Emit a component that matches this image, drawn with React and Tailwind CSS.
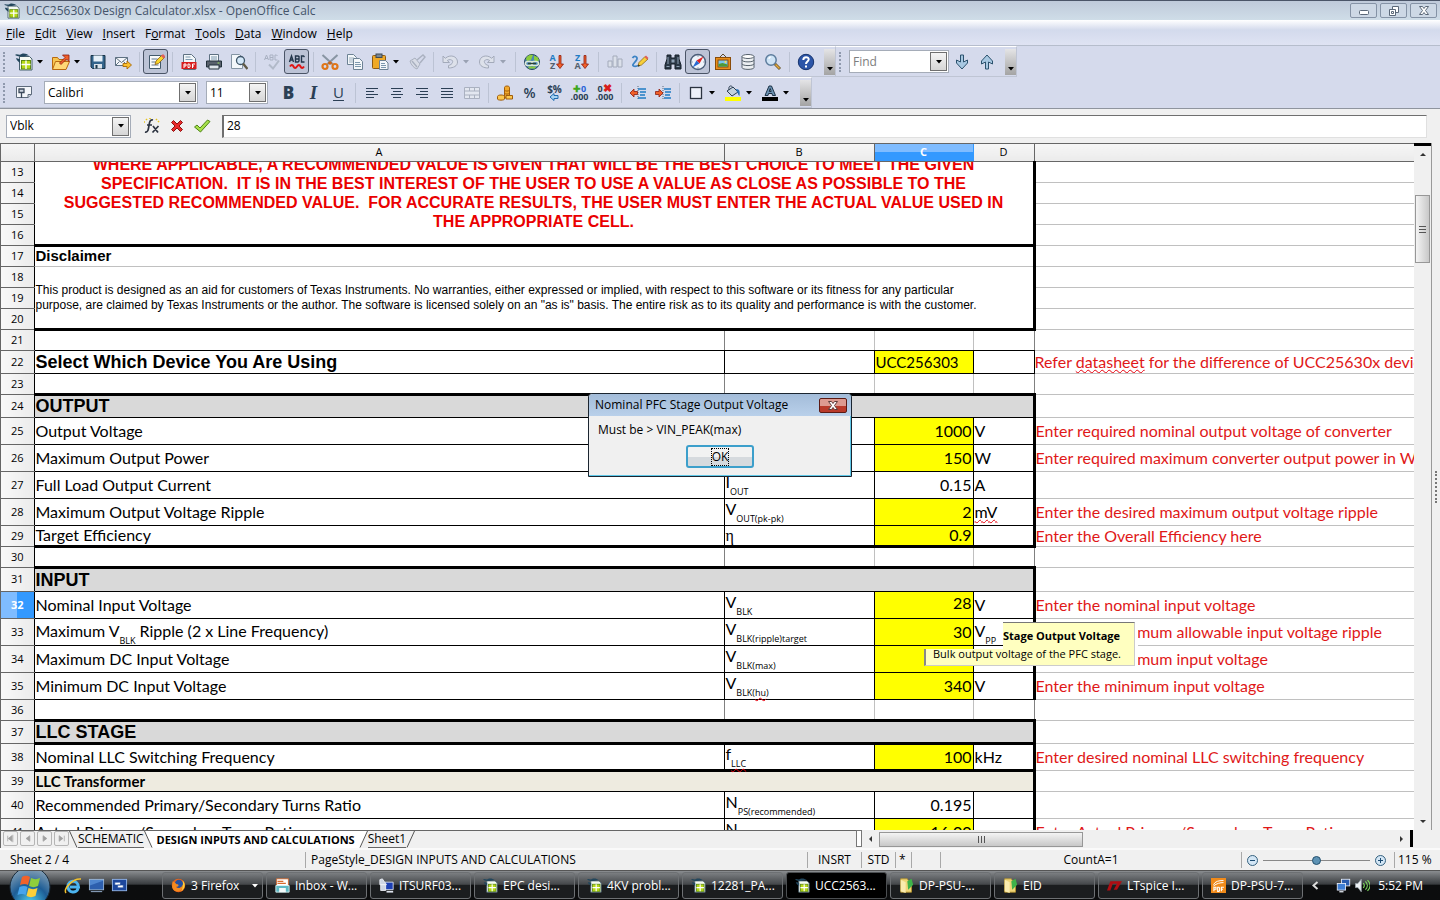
import { clsx } from 'clsx';

const MENUS = ['File', 'Edit', 'View', 'Insert', 'Format', 'Tools', 'Data', 'Window', 'Help'];
const MENU_KEYS = { Format: 1 };

const NAVY = '#2b3f55';

/* ---------- toolbar drawings, all on a 18x18 grid ---------- */
const ICONS = {
  calc: (
    <>
      <path d="M4.500 3.500h10l2.500 2.500v11H4.500z" fill="#f6faf2" stroke="#47606e" />
      <path d="M0 2c2-2 4 1 6.500-1C9 0 12 1 14 2.500c-3-.5-4 1-6.500 1C4 3.500 2 3 0 2z" fill="#22465c" />
      <path d="M1 5.500c1.500-1 3 1 4 .5v4c-1-1-3-2-4-4.500z" fill="#22465c" />
      <rect x="6.500" y="7.500" width="9" height="8.500" fill="#b7d916" stroke="#5f8a14" />
      <path d="M6.500 11.500h9M11 7.500v8.500" stroke="#fff" strokeWidth="1.400" />
    </>
  ),
  open: (
    <>
      <path d="M.5 16V4.500h5l1.500 2h7V16z" fill="#f8c650" stroke="#b96a10" />
      <path d="M.5 16.500l3-8h14l-3.500 8z" fill="#ffd876" stroke="#b96a10" />
      <path d="M7.500 10l5.500-5.500L10.500 2h6.500v6.500L14.500 6 9 11.500z" fill="#f0602a" stroke="#8d1d10" strokeWidth=".8" />
    </>
  ),
  save: (
    <>
      <path d="M2 2.500h14v13H3.500L2 14z" fill="#34658c" stroke="#183448" />
      <rect x="4.500" y="2.500" width="9" height="6" fill="#e6f0f8" />
      <rect x="5" y="11" width="8" height="4.500" fill="#dbe3ea" />
      <rect x="6.500" y="12" width="2" height="3.500" fill="#183448" />
    </>
  ),
  mail: (
    <>
      <path d="M1.500 4.500h12v8h-12z" fill="#f4f6fa" stroke="#5e7182" />
      <path d="M1.500 4.500l6 5 6-5M1.500 12.500l4-4M9.500 8.500l2 2" fill="none" stroke="#5e7182" />
      <path d="M9 10.500h4V8l4.500 4-4.500 4v-2.500H9z" fill="#fbc02d" stroke="#a86908" strokeWidth=".9" />
    </>
  ),
  edit: (
    <>
      <path d="M2.500 2.500h11v13h-11z" fill="#f9fbfd" stroke="#42596b" />
      <path d="M4.500 6h6M4.500 9h4M4.500 12h7" stroke="#60778a" />
      <path d="M8 11.500l1-3.500 6-6 2.500 2.500-6 6z" fill="#f8d62a" stroke="#8d5a14" strokeWidth=".8" />
      <path d="M14 3l2-2 2.500 2.500-2 2z" fill="#e0605c" />
    </>
  ),
  pdf: (
    <>
      <path d="M3.500 1.500h8l4 4v11h-12z" fill="#f3f7fa" stroke="#5e7182" />
      <path d="M5.500 4h5M5.500 6.500h7" stroke="#7c98ad" />
      <rect x="1.500" y="9" width="15" height="7" fill="#d81e1e" />
      <path d="M4 15v-4h2v2H4M8 11v3.500h1.500l.5-.5v-2.500L9 11zM12.500 15v-4h2.500M12.500 13H14" fill="none" stroke="#fff" />
    </>
  ),
  print: (
    <>
      <path d="M4.500 8V1.500h9V8" fill="#f4f8fb" stroke="#5e7182" />
      <path d="M6 4h6M6 6h6" stroke="#7c98ad" />
      <path d="M1.500 8h15v6h-15z" fill="#59616c" stroke="#22303a" />
      <path d="M4 12h10v4H4z" fill="#dfe5ea" stroke="#22303a" />
      <rect x="12.500" y="9.500" width="2" height="1" fill="#9be05a" />
    </>
  ),
  preview: (
    <>
      <path d="M1.500 1.500h8l3 3v11h-11z" fill="#f3f7fa" stroke="#8494a3" />
      <circle cx="10.500" cy="7.500" r="4" fill="#d4e8f8" stroke="#3e5568" strokeWidth="1.300" />
      <path d="M13 10.500l4.500 5.500" stroke="#5f5a46" strokeWidth="2.400" />
    </>
  ),
  spell: (
    <>
      <path d="M1.500 7l2-5 2 5M2 5.500h3M7 2v5h3V2zM7 4.500h3M14.500 3l-1-1H12v5h2.500" fill="none" stroke="#a9b1c2" />
      <path d="M6 11.500l4 4 6-8" fill="none" stroke="#b2bac9" strokeWidth="2" />
    </>
  ),
  autospell: (
    <>
      <path d="M1.500 9l2-6 2 6M2 7h3M7.500 3v6H10l1-1V3.500L10 3zM7.500 6H11M16.500 4l-1-1h-2v6h3" fill="none" stroke="#22354a" strokeWidth="1.400" />
      <path d="M2 13.500q2-3 3.500 0t3.500 0 3.500 0 3.500 0" fill="none" stroke="#e01414" strokeWidth="2" />
    </>
  ),
  cut: (
    <>
      <path d="M1.500 2l11 10M16.500 2L5.500 12" stroke="#8895a3" strokeWidth="2" />
      <path d="M6.500 10l2.500-2 2.500 2-2.500 2z" fill="#c8641a" />
      <circle cx="4" cy="13.500" r="2.500" fill="none" stroke="#e07518" strokeWidth="2.200" />
      <circle cx="14" cy="13.500" r="2.500" fill="none" stroke="#e07518" strokeWidth="2.200" />
    </>
  ),
  copy: (
    <>
      <path d="M1.500 1.500h6l3 3v7h-9z" fill="#f3f7fa" stroke="#6c8294" />
      <path d="M3 5h5M3 7h5M3 9h5" stroke="#9db0bf" />
      <path d="M7.500 5.500h6l3 3v8h-9z" fill="#f3f7fa" stroke="#6c8294" />
      <path d="M9 9.500h5M9 11.500h6M9 13.500h6" stroke="#7c98ad" />
    </>
  ),
  paste: (
    <>
      <rect x="1.500" y="2.500" width="13" height="13" rx="1" fill="#efa927" stroke="#8d5a14" />
      <rect x="5" y="1" width="6" height="3.500" fill="#7a8792" stroke="#3e4a55" />
      <path d="M8.500 7.500h6l2.500 2.500v6.500H8.500z" fill="#f4f8fb" stroke="#6c8294" />
      <path d="M10 10.500h4M10 12.500h5M10 14.500h5" stroke="#7c98ad" />
    </>
  ),
  brush: (
    <>
      <path d="M2 8l5-3 5 6-3 5c-3-1-6-4-7-8z" fill="#d8dce6" stroke="#aab1c0" />
      <path d="M9 7l6-5 2 2-5 6M4 8l5 6" fill="none" stroke="#aab1c0" strokeWidth="1.400" />
    </>
  ),
  undo: <path d="M2 3v6.500h6.500L6.300 7.500c2.700-2 6.200-.5 5.200 2-.5 1.500-2 2.500-4 3v2.500c5 0 9-2 9-6C16.500 3 9 1 4.300 5.300z" fill="#dde1ea" stroke="#a3aaba" />,
  redo: <path d="M16 3v6.500H9.500l2.200-2C9 5.500 5.500 7 6.500 9.500c.5 1.500 2 2.500 4 3v2.500c-5 0-9-2-9-6C1.500 3 9 1 13.700 5.300z" fill="#dde1ea" stroke="#a3aaba" />,
  link: (
    <>
      <circle cx="9" cy="9" r="7.500" fill="#4a86b5" stroke="#24445c" />
      <path d="M3 6c1-4 5-4.500 7-4l-2 5-4 1zM11 6V2.500l4 2 1 3-4 1z" fill="#8ccc3c" />
      <rect x="2.500" y="8.500" width="7" height="4" rx="2" fill="none" stroke="#dde8d8" strokeWidth="1.600" />
      <rect x="8.500" y="8.500" width="7" height="4" rx="2" fill="none" stroke="#dde8d8" strokeWidth="1.600" />
      <path d="M5 10.500h8" stroke="#2c4234" strokeWidth="1.400" />
      <path d="M5.500 14.500h7" stroke="#8ccc3c" strokeWidth="2" />
    </>
  ),
  chart: (
    <>
      <path d="M2 8h4v6H2zM7 3h4v11H7zM12 6h4v8h-4z" fill="#dbe0ea" stroke="#a3aaba" />
    </>
  ),
  draw: (
    <>
      <path d="M1.500 5c2-3 6-1 4 2s-5 5-3 6 4 0 6-1" fill="none" stroke="#3c83c4" strokeWidth="1.800" />
      <path d="M7 13l1-3.500 6-6L17 6l-6.500 6z" fill="#f8cf3a" stroke="#8d6a14" strokeWidth=".8" />
      <path d="M13.500 4l1.500-1.500 2.500 2.500L16 6.500z" fill="#e0605c" />
      <path d="M7 13.500l.5-2 1.500 1.500z" fill="#222" />
    </>
  ),
  find: (
    <>
      <path d="M3 2h4v3h4V2h4v4l2 6v4h-6v-5H7v5H1v-4l2-6z" fill="#2c3947" stroke="#16202b" />
      <path d="M4 4v7M14 4v7M2.500 13.500h3M12.500 13.500h3" stroke="#8fa2b5" />
      <rect x="7.500" y="6.500" width="3" height="3" fill="#8fa2b5" />
    </>
  ),
  navigator: (
    <>
      <circle cx="9" cy="9" r="7.500" fill="#eef4fb" stroke="#4b5d78" strokeWidth="1.400" />
      <path d="M14.500 3.500L10.500 10.500 7.500 7.500z" fill="#e32222" />
      <path d="M3.500 14.500L7.500 7.500l3 3z" fill="#2a6ad0" />
      <path d="M9 2.500v1M9 14.500v1M2.500 9h1M14.500 9h1" stroke="#4b5d78" />
    </>
  ),
  gallery: (
    <>
      <path d="M6 4l3-3 3 3" fill="none" stroke="#5c4a2c" />
      <rect x="1.500" y="4.500" width="15" height="12" fill="#e88f1c" stroke="#8a4c0a" />
      <rect x="4" y="7" width="10" height="7" fill="#79c4ee" stroke="#8a4c0a" />
      <path d="M4.500 13.500V11l4-1 5 1.500v2z" fill="#4f9a34" />
      <circle cx="11.500" cy="9" r="1" fill="#ffe24a" />
    </>
  ),
  db: (
    <>
      <path d="M3 3.500v11c0 2.500 12 2.500 12 0v-11" fill="#eceff2" stroke="#56616c" />
      <path d="M3 7c0 2.500 12 2.500 12 0M3 10.700c0 2.500 12 2.500 12 0" fill="none" stroke="#56616c" />
      <ellipse cx="9" cy="3.500" rx="6" ry="2" fill="#fff" stroke="#56616c" />
    </>
  ),
  zoom: (
    <>
      <circle cx="7" cy="7" r="5.200" fill="#cfe4f6" stroke="#5c7c9c" strokeWidth="1.500" />
      <path d="M5 6c0-1.500 1-2 2-2" stroke="#fff" fill="none" strokeWidth="1.200" />
      <path d="M11 11l5 5" stroke="#6d5a30" strokeWidth="3" />
      <path d="M11.500 11.500l4 4" stroke="#e8a93a" strokeWidth="1.500" />
    </>
  ),
  help: (
    <>
      <circle cx="9" cy="9" r="7.700" fill="#2c55a8" stroke="#17346e" />
      <path d="M6.300 7c0-4 5.700-3.500 5.400-.5C11.500 8.500 9 8.500 9 11M9 12.500v2" fill="none" stroke="#fff" strokeWidth="2" />
    </>
  ),
  down: <path d="M7.500 2h3v7l4-2v3L9 16 3.500 10V7l4 2z" fill="#a8c8e2" stroke="#2c526e" strokeLinejoin="round" />,
  up: <path d="M7.500 16h3V9l4 2V8L9 2 3.500 8v3l4-2z" fill="#a8c8e2" stroke="#2c526e" strokeLinejoin="round" />,
  styles: (
    <>
      <path d="M1.500 2.500h15v8l-3.500 3h-11.500z" fill="#f4f6fa" stroke="#5e6b7c" />
      <path d="M16.500 10.500H13v3" fill="#cdd4df" stroke="#5e6b7c" />
      <path d="M4 5h5v3.500H4zM6.500 8.500V14" fill="#cdd4df" stroke="#3c4a5c" strokeWidth="1.300" />
    </>
  ),
  left: <path d="M3 4.500h12M3 7.500h8M3 10.500h12M3 13.500h8" stroke={NAVY} />,
  center: <path d="M3 4.500h12M5 7.500h8M3 10.500h12M5 13.500h8" stroke={NAVY} />,
  right: <path d="M3 4.500h12M7 7.500h8M3 10.500h12M7 13.500h8" stroke={NAVY} />,
  justify: <path d="M3 4.500h12M3 7.500h12M3 10.500h12M3 13.500h12" stroke={NAVY} />,
  merge: <path d="M1.500 3.500h15v11h-15zM1.500 7h15M1.500 11h15M6.500 3.500V7M11.500 3.500V7M6.500 11v3.500M11.500 11v3.500" fill="#e3e7f0" stroke="#aab1c0" />,
  currency: (
    <>
      <path d="M8.500 3.500c0-2 5-2 5 0v9c0 2-5 2-5 0z" fill="#f3aa2c" stroke="#a05c0c" />
      <path d="M8.500 6c1 1.500 4 1.500 5 0M8.500 9c1 1.500 4 1.500 5 0" fill="none" stroke="#a05c0c" />
      <path d="M1.500 12.500c0-2 7-2 7 0v2.500c0 1.500-7 1.500-7 0zM10 11.500h6.500V15H10z" fill="#fbc74e" stroke="#a05c0c" />
    </>
  ),
  outdent: (
    <>
      <path d="M9 2v14" stroke="#5b6b7a" strokeDasharray="1 1" />
      <path d="M9 5h8M11 8h6M11 11h5M9 14h8" stroke="#1f7cc4" strokeWidth="1.500" />
      <path d="M8.500 7.500H5V5L1 9l4 4v-2.500h3.500z" fill="#f0602a" stroke="#8d1d10" strokeWidth=".8" />
    </>
  ),
  indent: (
    <>
      <path d="M9 2v14" stroke="#5b6b7a" strokeDasharray="1 1" />
      <path d="M10 5h7M11 8h6M11 11h5M10 14h7" stroke="#1f7cc4" strokeWidth="1.500" />
      <path d="M1.500 7.500H5V5l4 4-4 4v-2.500H1.500z" fill="#f0602a" stroke="#8d1d10" strokeWidth=".8" />
    </>
  ),
  border: <rect x="3.500" y="3.500" width="11" height="11" fill="#eef1fa" stroke="#2b3340" strokeWidth="1.300" />,
  bucket: (
    <>
      <path d="M3 7l6-4 5 5-6 4z" fill="#c4d2de" stroke="#2c3f52" />
      <path d="M5 6c-1-5 3-5 4-2" fill="none" stroke="#2c3f52" />
      <path d="M12 5c4 0 4 3 3.500 7-2-1-1-3-2.500-4z" fill="#2a72b8" />
      <rect x="1" y="13" width="16" height="4" fill="#ffff00" />
    </>
  ),
  fontColor: (
    <>
      <path d="M4 11.500L8 2h2.500l4 9.500h-3L11 9.500H7.500L7 11.500zM8.200 7.500h2L9.200 4.500z" fill="#6d93b4" stroke="#1d3347" />
      <rect x="1" y="13" width="16" height="4" fill="#000" />
    </>
  ),
  fx: (
    <>
      <path d="M10 3c-3-1-3.500 2-4 5.500S5 16 2 15M4 8h5M10 9l5 6.500M15.500 9L9.500 15.500" fill="none" stroke="#2c3340" strokeWidth="1.700" />
      <path d="M3 2l1 1M1 5h1M13 2l1 1M15 5l1-1M7 1v1" stroke="#e8c520" strokeWidth="1.600" />
    </>
  ),
  reject: <path d="M3.500 5.500l2-2L9 7l3.500-3.500 2 2L11 9l3.500 3.500-2 2L9 11l-3.500 3.500-2-2L7 9z" fill="#e82a2a" stroke="#8d1010" />,
  accept: <path d="M1.500 10L4 8l3 3 7.500-8L17 4.500 7.500 15z" fill="#a6e04a" stroke="#4d8416" />,
  ie: (
    <>
      <path d="M14 11.500c-1 5-10 5-10-2s10-7 10.500 0.500H6" fill="none" stroke="#4cb4ef" strokeWidth="3" />
      <path d="M2 16C-1 12 9 1 17 2" fill="none" stroke="#f2c12e" strokeWidth="1.500" />
    </>
  ),
  desktop: (
    <>
      <rect x="1.500" y="2.500" width="15" height="11" fill="#4f86cf" stroke="#9cb6d6" />
      <path d="M2 9l14-5v9H2z" fill="#2d5fae" />
      <path d="M3 15.500h12" stroke="#9cb6d6" />
    </>
  ),
  switcher: (
    <>
      <rect x="1.500" y="2.500" width="15" height="12" fill="#1d479c" stroke="#8fb2e6" />
      <path d="M4 5.500h6v3H4zM7 8.500h6v3H7z" fill="#fff" stroke="#1d479c" strokeWidth=".7" />
    </>
  ),
  firefox: (
    <>
      <circle cx="9" cy="9" r="8" fill="#e8641a" />
      <circle cx="9.500" cy="7" r="5" fill="#25509e" />
      <path d="M2 4c1 1 3 1 4 3 1 1 3 0 3 2s-3 1-3 2c2 2 7 1 8-3 1 4-2 8-6 8S1 13 1.500 9z" fill="#f58a1e" />
      <path d="M14 3c4 4 3 10-2 13 2-3 3-8 2-13z" fill="#fbd13b" />
    </>
  ),
  inbox: (
    <>
      <rect x="2" y="1" width="14" height="10" fill="#fff" stroke="#d86a2c" />
      <path d="M3 4h7M3 6.500h10" stroke="#d86a2c" strokeWidth="1.500" />
      <path d="M1 9h16v8H1z" fill="#5fb9c4" stroke="#dff3f5" />
      <path d="M5 12h8v5H5z" fill="#f2fafa" />
    </>
  ),
  remote: (
    <>
      <path d="M7 5h10v9H7z" fill="#1c3fb4" stroke="#e5e9f5" />
      <path d="M1 2l3-1 5 7H1zM2 8h6v7H2z" fill="#cfd6e4" stroke="#eef1f8" />
      <path d="M9 16.500h8" stroke="#dfe4ee" strokeWidth="2" />
    </>
  ),
  folder: (
    <>
      <path d="M2 1h8l1 2h4v14H2z" fill="#f0d678" stroke="#b7952e" />
      <path d="M2 2l6 3v13l-6-2z" fill="#fbecae" />
      <path d="M10 4l5-3 2 7-6 6z" fill="#3fb34a" />
    </>
  ),
  spice: <path d="M0 15L4 4h14l-6 10H8l4-7H7l-3 8z" fill="#b00d12" />,
  pdfApp: (
    <>
      <rect x="0" y="0" width="18" height="18" fill="#f08a1a" />
      <path d="M3 8c2-4 6-5 12-5M3 9.500c4-3 8-4 12-4" stroke="#fff" fill="none" strokeWidth="1.200" />
      <path d="M3.500 16v-5H6v2.500H3.500M8 11v5h1.500l.8-1v-3l-.8-1zM12.500 16v-5h3M12.500 13.500h2" fill="none" stroke="#fff" strokeWidth="1.300" />
    </>
  ),
  network: (
    <>
      <rect x="6.500" y="1.500" width="10" height="8" fill="#2a5cae" stroke="#e9eef7" />
      <rect x="1.500" y="6.500" width="10" height="8" fill="#3f7fd4" stroke="#e9eef7" />
      <path d="M4 16.500h5" stroke="#e9eef7" strokeWidth="1.500" />
    </>
  ),
  volume: (
    <>
      <path d="M.5 6.500h3l4-5v15l-4-5h-3z" fill="#eef1f4" stroke="#9aa3ab" />
      <path d="M10 6c1.500 2 1.500 4 0 6M12.500 4c3 3 3 7 0 10M15 2.500c4 4 4 9 0 13" fill="none" stroke="#7fdc5e" strokeWidth="1.400" />
    </>
  ),
};

const TEXT_ICONS = {
  bold: <span className="text-[17px] font-extrabold text-[#2b3f55]">B</span>,
  italic: <span className="font-['Liberation_Serif',serif] text-[19px] font-bold italic text-[#2b3f55]">I</span>,
  underline: <span className="text-[15px] text-[#2b3f55] underline underline-offset-2">U</span>,
  percent: <span className="text-[14px] font-semibold text-[#2b3f55]">%</span>,
  sortAsc: <SortMark top="A" bottom="Z" />,
  sortDesc: <SortMark top="Z" bottom="A" />,
  numFormat: (
    <span className="flex flex-col items-center text-[10px] leading-[8px] font-bold text-[#2b3f55]">
      <span>$%</span>
      <svg width="10" height="8" viewBox="0 0 10 8">
        <path d="M5 .5v2h4v3H5v2L1 4z" fill="#a8d4f4" stroke="#1f6cae" />
      </svg>
    </span>
  ),
  addDec: (
    <span className="flex flex-col text-[9px] leading-[8px] font-bold text-[#2b3f55]">
      <span><span className="text-[#3fa61c]">✚</span><span className="text-[#2a62d8]">0</span></span>
      <span>.000</span>
    </span>
  ),
  delDec: (
    <span className="flex flex-col text-[9px] leading-[8px] font-bold text-[#2b3f55]">
      <span>0<span className="text-[11px] text-[#d81e1e]">✖</span></span>
      <span>.000</span>
    </span>
  ),
};

function SortMark({ top, bottom }) {
  return (
    <span className="flex items-center">
      <span className="flex flex-col text-[9px] leading-[8px] font-bold">
        <span className="text-[#1f7cc4]">{top}</span>
        <span className="text-[#53606e]">{bottom}</span>
      </span>
      <svg width="8" height="16" viewBox="0 0 8 16">
        <path d="M3 1.500h2V10h2.500L4 14.500.5 10H3z" fill="#f0602a" stroke="#8d1d10" strokeWidth=".8" />
      </svg>
    </span>
  );
}

function Icon({ name, size = 18 }) {
  return (
    <svg width={size} height={size} viewBox="0 0 18 18" aria-hidden="true" className="shrink-0">
      {ICONS[name]}
    </svg>
  );
}

function Caret({ className = 'text-black' }) {
  return (
    <svg width="6" height="4" viewBox="0 0 6 4" className={className} aria-hidden="true">
      <path d="M0 0h6L3 3.500z" fill="currentColor" />
    </svg>
  );
}

function Grip() {
  return (
    <span className="flex w-[11px] shrink-0 justify-start pl-[3px]">
      <span className="h-5 border-l-2 border-dotted border-[#8f99ad]" />
    </span>
  );
}

function ToolButton({ name, active }) {
  return (
    <button
      type="button"
      aria-label={name}
      className={clsx(
        'flex size-[25px] shrink-0 items-center justify-center leading-none',
        active && 'rounded-[3px] border border-[#4a5466] bg-[#bcc3d6]'
      )}
    >
      {TEXT_ICONS[name] || <Icon name={name} />}
    </button>
  );
}

// '|' is a separator, 'v' a drop arrow, '-v' a disabled one, '*name' a pressed button
function Tools({ items }) {
  return items.map((item, i) => {
    if (item === '|') {
      return (
        <span key={i} className="flex h-5 w-2 shrink-0 justify-center">
          <span className="w-px bg-[#bcc3d4]" />
        </span>
      );
    }
    if (item === 'v' || item === '-v') {
      return (
        <button key={i} type="button" aria-label="More" className="flex h-6 w-3 shrink-0 items-center justify-start pl-px">
          <Caret className={item === 'v' ? 'text-black' : 'text-[#9aa2b3]'} />
        </button>
      );
    }
    const active = item[0] === '*';
    return <ToolButton key={i} name={active ? item.slice(1) : item} active={active} />;
  });
}

function BarEnd() {
  return (
    <button
      type="button"
      aria-label="Toolbar options"
      className="ml-[6px] flex h-[26px] w-[11px] shrink-0 items-end justify-center bg-linear-to-b from-[#e4e4e6] to-[#a4a4a4] pb-1"
    >
      <Caret />
    </button>
  );
}

function Combo({ label, value, className, muted }) {
  return (
    <div className={clsx('relative h-[23px] shrink-0 border border-[#a5acb8] bg-white', className)}>
      <select
        aria-label={label}
        className={clsx('h-full w-full appearance-none bg-transparent pl-[3px] outline-none', muted && 'text-[#7d7d7d]')}
      >
        <option>{value}</option>
      </select>
      <span className="pointer-events-none absolute inset-y-px right-px flex w-[17px] items-center justify-center border border-[#6f6f6f] bg-linear-to-b from-[#f4f4f4] to-[#d6d6d6]">
        <Caret />
      </span>
    </div>
  );
}

function TitleBar() {
  const btn = 'flex h-[15px] w-[27px] items-center justify-center rounded-[2px] border border-[#8593a6] bg-[#cdd8e5]';
  return (
    <header className="flex h-5 shrink-0 items-center border-t border-[#4b5568] bg-linear-to-b from-[#bfcada] to-[#cfdde8] pl-1 pr-[3px]">
      <Icon name="calc" size={16} />
      <h1 className="ml-[6px] flex-1 text-[12px] text-[#44546a]">UCC25630x Design Calculator.xlsx - OpenOffice Calc</h1>
      <div className="flex gap-[3px]">
        <button type="button" aria-label="Minimize" className={btn}>
          <svg width="12" height="10"><rect x="1.500" y="4.500" width="9" height="4" rx="1" fill="#fff" stroke="#5b6878" /></svg>
        </button>
        <button type="button" aria-label="Restore" className={btn}>
          <svg width="12" height="12">
            <path d="M4.500 1.500h6v6h-6z" fill="#fff" stroke="#5b6878" />
            <path d="M1.500 4.500h6v6h-6zM3.500 6.500h2v2h-2z" fill="#fff" stroke="#5b6878" />
          </svg>
        </button>
        <button type="button" aria-label="Close" className={btn}>
          <svg width="12" height="11"><path d="M1.500 1.500h3L6 3.500l1.500-2h3L7.500 5.500l3 4h-3L6 7.500l-1.500 2h-3l3-4z" fill="#fff" stroke="#5b6878" /></svg>
        </button>
      </div>
    </header>
  );
}

function MenuBar() {
  return (
    <nav className="flex h-[26px] shrink-0 items-center gap-[10px] border-b border-[#b6bdcc] bg-linear-to-b from-white via-[#d3daec] via-40% to-[#dfe3f3] pt-[2px] pl-[6px] text-[12px]">
      {MENUS.map((m) => {
        const k = MENU_KEYS[m] || 0;
        return (
          <button key={m} type="button">
            {m.slice(0, k)}<span className="underline">{m[k]}</span>{m.slice(k + 1)}
          </button>
        );
      })}
    </nav>
  );
}

function Toolbars() {
  const bar = 'flex items-center border-t border-r border-b border-t-white border-r-[#bfc5d4] border-b-[#bfc5d4]';
  return (
    <div className="shrink-0 border-b border-[#8f949e] bg-[#d5daec] text-[12px]">
      <div className="flex h-[31px]">
        <div className={bar}>
          <Grip />
          <Tools
            items={[
              'calc', 'v', 'open', 'v', 'save', 'mail', '|', '*edit', '|', 'pdf', 'print', 'preview', '|',
              'spell', '*autospell', '|', 'cut', 'copy', 'paste', 'v', 'brush', '|', 'undo', '-v', 'redo', '-v', '|',
              'link', 'sortAsc', 'sortDesc', '|', 'chart', 'draw', '|', 'find', '*navigator', 'gallery', 'db', 'zoom', '|', 'help',
            ]}
          />
          <BarEnd />
        </div>
        <div className={bar}>
          <Grip />
          <Combo label="Find" value="Find" className="ml-[2px] w-[100px]" muted />
          <Tools items={['down', 'up']} />
          <BarEnd />
        </div>
      </div>
      <div className="flex h-[31px]">
        <div className={bar}>
          <Grip />
          <Tools items={['styles']} />
          <Combo label="Font name" value="Calibri" className="ml-2 w-[154px]" />
          <Combo label="Font size" value="11" className="mx-2 w-[62px]" />
          <Tools
            items={[
              'bold', 'italic', 'underline', '|', 'left', 'center', 'right', 'justify', 'merge', '|',
              'currency', 'percent', 'numFormat', 'addDec', 'delDec', '|', 'outdent', 'indent', '|',
              'border', 'v', 'bucket', 'v', 'fontColor', 'v',
            ]}
          />
          <BarEnd />
        </div>
      </div>
    </div>
  );
}

function FormulaBar() {
  return (
    <div className="flex h-[34px] shrink-0 items-center bg-[#f0f0f0] pl-[6px] pr-[13px] text-[12px]">
      <Combo label="Name box" value="Vblk" className="w-[125px]" />
      <div className="mx-2 flex">
        <ToolButton name="fx" />
        <ToolButton name="reject" />
        <ToolButton name="accept" />
      </div>
      <input
        aria-label="Formula"
        defaultValue="28"
        className="h-[23px] min-w-0 flex-1 border-t border-r border-b border-l-2 border-t-[#6f6f6f] border-r-[#e0e0e0] border-b-[#e0e0e0] border-l-[#6f6f6f] bg-white pb-px pl-[3px] outline-none"
      />
    </div>
  );
}

/* ---------- sheet ---------- */
const Wavy = ({ children }) => (
  <span className="underline decoration-red-600 decoration-wavy decoration-1 underline-offset-1">{children}</span>
);

const SUB = "static align-[-7px] font-['Open_Sans',sans-serif] text-[9px] leading-[0]";

function Sym({ base, sub, wavy }) {
  return (
    <>
      {base}
      <sub className={SUB}>{wavy ? <Wavy>{sub}</Wavy> : sub}</sub>
    </>
  );
}

const ROWS = [
  { n: 13, kind: 'banner' },
  { n: 14, kind: 'covered' },
  { n: 15, kind: 'covered' },
  { n: 16, kind: 'covered' },
  { n: 17, kind: 'disclaimer' },
  { n: 18, kind: 'terms' },
  { n: 19, kind: 'covered' },
  { n: 20, kind: 'covered' },
  { n: 21, kind: 'blank', under: 'thin' },
  { n: 22, kind: 'device', h: 'h-[23px]' },
  { n: 23, kind: 'blank', under: 'thick' },
  { n: 24, kind: 'section', title: 'OUTPUT', h: 'h-[23px]' },
  { n: 25, label: 'Output Voltage', sym: <Sym base="V" sub="OUT" />, value: '1000', unit: 'V', note: 'Enter required nominal output voltage of converter' },
  { n: 26, label: 'Maximum Output Power', sym: <Sym base="P" sub="OUT" />, value: '150', unit: 'W', note: 'Enter required maximum converter output power in Watts' },
  { n: 27, label: 'Full Load Output Current', sym: <Sym base="I" sub="OUT" />, value: '0.15', unit: 'A', plain: true },
  { n: 28, label: 'Maximum Output Voltage Ripple', sym: <Sym base="V" sub="OUT(pk-pk)" />, value: '2', unit: <Wavy>mV</Wavy>, note: 'Enter the desired maximum output voltage ripple' },
  { n: 29, label: 'Target Efficiency', sym: <span className="font-['Liberation_Serif',serif]">η</span>, value: '0.9', note: 'Enter the Overall Efficiency here', h: 'h-[21px]', under: 'thick' },
  { n: 30, kind: 'blank', under: 'thick' },
  { n: 31, kind: 'section', title: 'INPUT', h: 'h-[24px]' },
  { n: 32, label: 'Nominal Input Voltage', sym: <Sym base="V" sub="BLK" />, value: '28', unit: 'V', note: 'Enter the nominal input voltage', current: true },
  { n: 33, label: <>Maximum V<sub className={SUB}>BLK</sub> Ripple (2 x Line Frequency)</>, sym: <Sym base="V" sub="BLK(ripple)target" />, value: '30', unit: <Sym base="V" sub="PP" />, note: 'Enter the maximum allowable input voltage ripple' },
  { n: 34, label: 'Maximum DC Input Voltage', sym: <Sym base="V" sub="BLK(max)" />, value: '', unit: '', note: 'Enter the maximum input voltage' },
  { n: 35, label: 'Minimum DC Input Voltage', sym: <Sym base="V" sub={<>BLK(<Wavy>hu</Wavy>)</>} />, value: '340', unit: 'V', note: 'Enter the minimum input voltage' },
  { n: 36, kind: 'blank', under: 'thick' },
  { n: 37, kind: 'section', title: 'LLC STAGE', h: 'h-[23px]', under: 'thick' },
  { n: 38, label: 'Nominal LLC Switching Frequency', sym: <Sym base="f" sub="LLC" wavy />, value: '100', unit: 'kHz', note: 'Enter desired nominal LLC switching frequency', under: 'thick' },
  { n: 39, kind: 'sub', title: 'LLC Transformer' },
  { n: 40, label: 'Recommended Primary/Secondary Turns Ratio', sym: <Sym base="N" sub="PS(recommended)" />, value: '0.195', plain: true },
  { n: 41, label: 'Actual Primary/Secondary Turns Ratio', sym: <Sym base="N" sub="PS" />, value: '16.00', note: 'Enter Actual Primary/Secondary Turns Ratio' },
];

const UNDER = {
  thin: 'border-b border-b-black',
  thick: 'border-b-3 border-b-black',
  gray: 'border-b border-b-[#c0c0c0]',
};
const EDGE = 'border-r-3 border-r-black';

function RowCells({ row }) {
  const under = UNDER[row.under || 'thin'];
  switch (row.kind) {
    case 'covered':
      return null;
    case 'banner':
      return (
        <td colSpan={4} rowSpan={4} className={clsx(UNDER.thick, EDGE, 'p-0')}>
          <div className="flex h-[81px] flex-col justify-end overflow-hidden pb-3 text-center font-['Liberation_Sans',sans-serif] text-[16px] leading-[19px] font-bold whitespace-pre text-[#ea0000]">
            <p>WHERE APPLICABLE, A RECOMMENDED VALUE IS GIVEN THAT WILL BE THE BEST CHOICE TO MEET THE GIVEN</p>
            <p>{'SPECIFICATION.  IT IS IN THE BEST INTEREST OF THE USER TO USE A VALUE AS CLOSE AS POSSIBLE TO THE'}</p>
            <p>{'SUGGESTED RECOMMENDED VALUE.  FOR ACCURATE RESULTS, THE USER MUST ENTER THE ACTUAL VALUE USED IN'}</p>
            <p>THE APPROPRIATE CELL.</p>
          </div>
        </td>
      );
    case 'disclaimer':
      return (
        <td colSpan={4} className={clsx(UNDER.gray, EDGE, "p-0 pl-px font-['Liberation_Sans',sans-serif] text-[15px] leading-4 font-bold")}>
          Disclaimer
        </td>
      );
    case 'terms':
      return (
        <td colSpan={4} rowSpan={3} className={clsx(UNDER.thick, EDGE, "p-0 pt-[2px] pl-px font-['Liberation_Sans',sans-serif] text-[12px] leading-[15px] whitespace-nowrap")}>
          <p>This product is designed as an aid for customers of Texas Instruments. No warranties, either expressed or implied, with respect to this software or its fitness for any particular</p>
          <p>purpose, are claimed by Texas Instruments or the author. The software is licensed solely on an "as is" basis. The entire risk as to its quality and performance is with the customer.</p>
        </td>
      );
    case 'blank':
      return (
        <>
          <td className={clsx(under, 'border-r border-r-[#808080] p-0')} />
          <td className={clsx(under, 'border-r border-r-[#c0c0c0] p-0')} />
          <td className={clsx(under, 'border-r border-r-[#c0c0c0] p-0')} />
          <td className={clsx(under, 'border-r border-r-[#808080] p-0')} />
        </>
      );
    case 'section':
      return (
        <td colSpan={4} className={clsx(under, EDGE, "bg-[#d9d9d9] p-0 pl-px font-['Liberation_Sans',sans-serif] text-[18px] leading-4 font-bold")}>
          {row.title}
        </td>
      );
    case 'sub':
      return (
        <td colSpan={4} className={clsx(under, EDGE, 'bg-[#eeebe0] p-0 pl-px text-[15px] leading-4 font-bold')}>
          {row.title}
        </td>
      );
    case 'device':
      return (
        <>
          <td className={clsx(under, "border-r border-r-black p-0 pl-px font-['Liberation_Sans',sans-serif] text-[18px] leading-4 font-bold")}>
            Select Which Device You Are Using
          </td>
          <td className={clsx(under, 'border-r border-r-black p-0')} />
          <td className={clsx(under, 'border-r border-r-black bg-[#ffff00] p-0 pl-px text-[15px] leading-4')}>UCC256303</td>
          <td className={clsx(under, 'border-r border-r-black p-0')} />
        </>
      );
    default:
      return (
        <>
          <td className={clsx(under, 'border-r border-r-black p-0 pl-px leading-4')}>{row.label}</td>
          <td className={clsx(under, 'border-r border-r-black p-0 pl-px leading-4', !row.h && 'pb-1')}>{row.sym}</td>
          <td
            className={clsx(
              under,
              'border-r border-r-black p-0 pr-px text-right leading-4',
              !row.plain && 'bg-[#ffff00]',
              row.current && 'pb-1'
            )}
          >
            {row.value}
          </td>
          <td className={clsx(under, EDGE, 'p-0 pl-px leading-4')}>{row.unit}</td>
        </>
      );
  }
}

function Sheet() {
  const head = 'border-r border-b border-[#666] bg-linear-to-b from-[#f6f6f6] to-[#ebebeb] p-0 font-normal';
  return (
    <table className="w-full table-fixed border-collapse font-['Lato',sans-serif] text-[16px]">
      <colgroup>
        <col className="w-[33px]" />
        <col className="w-[690px]" />
        <col className="w-[150px]" />
        <col className="w-[99px]" />
        <col className="w-[61px]" />
        <col />
      </colgroup>
      <thead>
        <tr className="h-[17px] font-['Open_Sans',sans-serif] text-[11px] leading-4">
          <td className={head} />
          <th className={head}>A</th>
          <th className={head}>B</th>
          <th className="border-r border-b border-r-[#3399ff] border-b-[#666] bg-linear-to-b from-[#7fbcff] from-50% to-[#3399ff] to-50% p-0 font-bold text-white">C</th>
          <th className={head}>D</th>
          <td className="border-b border-[#666] bg-linear-to-b from-[#f6f6f6] to-[#ebebeb] p-0" />
        </tr>
      </thead>
      <tbody>
        {ROWS.map((row) => (
          <tr key={row.n} className={row.h || (!row.kind ? 'h-[27px]' : 'h-[21px]')}>
            <th
              scope="row"
              className={clsx(
                "border-r border-b border-r-black border-b-[#666] p-0 font-['Open_Sans',sans-serif] text-[11px] leading-4",
                row.current
                  ? 'bg-linear-to-r from-[#7fbcff] from-50% to-[#3399ff] to-50% font-bold text-white'
                  : 'bg-linear-to-r from-[#f8f8f8] to-[#ebebeb] font-normal'
              )}
            >
              {row.n}
            </th>
            <RowCells row={row} />
            <td className="overflow-hidden border-b border-b-[#c0c0c0] p-0 leading-4 whitespace-nowrap text-[#e01818]">
              {row.kind === 'device' ? <>Refer <Wavy>datasheet</Wavy> for the difference of UCC25630x devices</> : row.note}
            </td>
          </tr>
        ))}
      </tbody>
    </table>
  );
}

function CellHint() {
  return (
    <div className="absolute top-[479px] left-[924px] flex w-[211px] flex-col items-end text-[11px] leading-4">
      <p className="h-[27px] w-[132px] overflow-hidden border-t border-r border-t-[#777] border-r-[#ccc] bg-[#ffffc0] pt-[5px] font-bold whitespace-nowrap shadow-[3px_0_0_#fff]">
        Stage Output Voltage
      </p>
      <p className="h-[17px] w-full overflow-hidden border-r border-b border-l-2 border-r-[#ccc] border-b-[#ccc] border-l-[#888] bg-[#ffffc0] pl-[7px] leading-[9px] whitespace-nowrap shadow-[3px_0_0_#fff]">
        Bulk output voltage of the PFC stage.
      </p>
    </div>
  );
}

function MessageBox() {
  return (
    <div
      role="dialog"
      aria-labelledby="msg-title"
      className="absolute top-[250px] left-[588px] flex h-[84px] w-[264px] flex-col rounded-t-sm border border-[#1b2530] bg-[#f0f0f0] text-[12px] shadow-[inset_-1px_-1px_0_#5fc8e8]"
    >
      <div className="flex h-[22px] items-center justify-between rounded-t-sm bg-linear-to-b from-[#a3bcd9] to-[#b9d0ea] pr-1 pl-[6px]">
        <h2 id="msg-title">Nominal PFC Stage Output Voltage</h2>
        <button type="button" aria-label="Close" className="flex h-[15px] w-7 items-center justify-center rounded-[2px] border border-[#5c1a14] bg-linear-to-b from-[#dd9a90] from-50% to-[#b93a2a] to-50%">
          <svg width="12" height="11"><path d="M1.500 1.500h3L6 3.500l1.500-2h3L7.500 5.500l3 4h-3L6 7.500l-1.500 2h-3l3-4z" fill="#fff" stroke="#5c3a38" /></svg>
        </button>
      </div>
      <p className="mt-[6px] pl-[9px] leading-4">Must be &gt; VIN_PEAK(max)</p>
      <button type="button" className="mt-[7px] flex h-[23px] w-[68px] items-center justify-center self-center rounded-[3px] border-2 border-[#3c9fcb] bg-linear-to-b from-[#f2f2f2] from-50% to-[#d6dade] to-50%">
        <span className="border border-dotted border-black leading-4">OK</span>
      </button>
    </div>
  );
}

function ScrollArrow({ dir }) {
  const d = { up: 'M0 4h6L3 1z', down: 'M0 1h6L3 4z', left: 'M4 0v6L1 3z', right: 'M1 0v6l3-3z' }[dir];
  return (
    <button type="button" aria-label={'Scroll ' + dir} className="flex size-[17px] shrink-0 items-center justify-center">
      <svg width="6" height="6" viewBox="0 0 6 6"><path d={d} fill="#333" /></svg>
    </button>
  );
}

function VScroll() {
  return (
    <div className="flex w-[17px] shrink-0 flex-col items-center border-t-3 border-black bg-[#f0f0f0]">
      <ScrollArrow dir="up" />
      <div className="mt-8 flex h-[68px] w-[15px] flex-col items-center justify-center gap-[2px] border border-[#979797] bg-linear-to-r from-[#f4f4f4] to-[#c8c8c8]">
        <span className="h-px w-[7px] bg-[#555]" />
        <span className="h-px w-[7px] bg-[#555]" />
        <span className="h-px w-[7px] bg-[#555]" />
      </div>
      <div className="flex-1" />
      <ScrollArrow dir="down" />
    </div>
  );
}

function Slant({ up, active }) {
  return (
    <svg width="9" height="17" viewBox="0 0 9 17" className="shrink-0" aria-hidden="true">
      {active && <path d={up ? 'M0 0h9L1 16.500H0z' : 'M0 0h9v16.500H8z'} fill="#fff" />}
      <path d={up ? 'M8.500 0L1 16.500' : 'M.5 0L8 16.500'} stroke="#555" />
    </svg>
  );
}

function SheetTabs() {
  const nav = ['M9 3v8M8 4v6L4 7zM3.500 4v6', 'M9 4v6L5 7z', 'M5 4v6l4-3z', 'M4 4v6l4-3zM9.500 4v6'];
  return (
    <div className="flex h-[18px] shrink-0 bg-[#f0f0f0] text-[12px] leading-4">
      <div className="flex w-[856px] items-start border-t border-l border-t-[#666] border-l-[#666] pl-[2px]">
        <div className="flex gap-[2px]">
          {nav.map((d, i) => (
            <button key={i} type="button" aria-label="Sheet navigation" className="size-[15px] rounded-[2px] border border-[#b5b5b5]">
              <svg width="13" height="13" viewBox="0 0 13 14"><path d={d} fill="#a0a0a0" stroke="#a0a0a0" strokeWidth=".8" /></svg>
            </button>
          ))}
        </div>
        <Slant />
        <button type="button" className="h-[17px] border-b border-[#666]">SCHEMATIC</button>
        <Slant active />
        <button type="button" className="h-[17px] bg-white px-1 text-[11px] font-bold">DESIGN INPUTS AND CALCULATIONS</button>
        <Slant up active />
        <button type="button" className="h-[17px] border-b border-[#666]">Sheet1</button>
        <Slant up />
      </div>
      <span className="h-[17px] w-[6px] border border-[#777] bg-white" />
      <ScrollArrow dir="left" />
      <div className="flex h-[15px] w-[204px] items-center justify-center gap-[2px] self-center border border-[#979797] bg-linear-to-b from-[#f4f4f4] to-[#c8c8c8]">
        <span className="h-[7px] w-px bg-[#555]" />
        <span className="h-[7px] w-px bg-[#555]" />
        <span className="h-[7px] w-px bg-[#555]" />
      </div>
      <div className="flex-1" />
      <ScrollArrow dir="right" />
      <span className="mr-[27px] h-[17px] w-[3px] bg-black" />
    </div>
  );
}

function StatusBar() {
  const cell = 'flex h-4 items-center border-l border-[#a8a8a8]';
  return (
    <footer className="flex h-[22px] shrink-0 items-center border-t-2 border-[#fafafa] bg-[#f0f0f0] text-[12px]">
      <span className="w-[305px] pl-[10px]">Sheet 2 / 4</span>
      <span className={clsx(cell, 'flex-1 pl-[5px]')}>PageStyle_DESIGN INPUTS AND CALCULATIONS</span>
      <span className={clsx(cell, 'w-[54px] justify-center')}>INSRT</span>
      <span className={clsx(cell, 'w-[34px] justify-center')}>STD</span>
      <span className={clsx(cell, 'w-4 pl-[3px]')}>*</span>
      <span className={clsx(cell, 'w-[29px]')} />
      <span className={clsx(cell, 'w-[301px] justify-center')}>CountA=1</span>
      <span className={clsx(cell, 'w-[153px] gap-[5px] pl-[5px]')}>
        <ZoomButton label="Zoom out" d="M3 5.500h5" />
        <input
          type="range"
          aria-label="Zoom"
          defaultValue="50"
          className="h-[11px] min-w-0 flex-1 appearance-none bg-linear-to-b from-transparent from-45% via-[#888] via-50% to-transparent to-55% [&::-webkit-slider-thumb]:size-[9px] [&::-webkit-slider-thumb]:appearance-none [&::-webkit-slider-thumb]:rounded-full [&::-webkit-slider-thumb]:border [&::-webkit-slider-thumb]:border-[#24506e] [&::-webkit-slider-thumb]:bg-[#5d92b4]"
        />
        <span className="pr-2"><ZoomButton label="Zoom in" d="M3 5.500h5M5.500 3v5" /></span>
      </span>
      <span className={clsx(cell, 'w-[46px] pl-[3px] whitespace-nowrap')}>115 %</span>
    </footer>
  );
}

function ZoomButton({ label, d }) {
  return (
    <button type="button" aria-label={label} className="flex">
      <svg width="11" height="11">
        <circle cx="5.500" cy="5.500" r="5" fill="#d3e6f5" stroke="#35607e" />
        <path d={d} stroke="#1c4a70" />
      </svg>
    </button>
  );
}

const TASKS = [
  ['firefox', '3 Firefox', 'menu'],
  ['inbox', 'Inbox - W...'],
  ['remote', 'ITSURF03...'],
  ['calc', 'EPC desi...'],
  ['calc', '4KV probl...'],
  ['calc', '12281_PA...'],
  ['calc', 'UCC2563...', 'active'],
  ['folder', 'DP-PSU-...'],
  ['folder', 'EID'],
  ['spice', 'LTspice I...'],
  ['pdfApp', 'DP-PSU-7...'],
];

function Taskbar() {
  return (
    <div className="flex h-[30px] shrink-0 items-center border-t border-[#555] bg-linear-to-b from-[#8a8d90] via-[#3a3d40] via-45% to-[#0c0d0e] to-50% text-[12px] text-white">
      <button type="button" aria-label="Start" className="ml-[9px] flex">
        <svg width="42" height="30" viewBox="0 0 42 30">
          <defs>
            <radialGradient id="orb" cx=".5" cy=".9" r=".9">
              <stop offset="0" stopColor="#4fd0f0" />
              <stop offset=".5" stopColor="#1d5d96" />
              <stop offset="1" stopColor="#8fa6b8" />
            </radialGradient>
          </defs>
          <circle cx="21" cy="16" r="20" fill="url(#orb)" stroke="#1a2c3c" />
          <path d="M13 6c3-2 6-1 8 0l-2 8c-2-1.500-5-1.500-8 0z" fill="#f0622a" />
          <path d="M22 7c3 1.500 6 1.500 9 0l-2 8c-3 1.500-6 1.500-9 0z" fill="#8fce3c" />
          <path d="M10.500 16c3-1.500 6-1.500 8 0l-2 8c-2-1.500-5-1.500-8 0z" fill="#48a4ec" />
          <path d="M19.500 17c3 1.500 6 1.500 9 0l-2 8c-3 1.500-6 1.500-9 0z" fill="#fcd03a" />
        </svg>
      </button>
      <div className="ml-[13px] flex gap-[6px]">
        <Icon name="ie" />
        <Icon name="desktop" size={17} />
        <Icon name="switcher" size={17} />
      </div>
      <div className="ml-[34px] flex gap-[3px]">
        {TASKS.map(([icon, text, mode], i) => (
          <button
            key={i}
            type="button"
            className={clsx(
              'flex h-[27px] w-[101px] items-center gap-[5px] rounded-[3px] border pl-2 whitespace-nowrap',
              mode === 'active'
                ? 'border-[#4c4f52] bg-black'
                : 'border-[#6d7073] bg-linear-to-b from-[#7b7e81] via-[#45484b] via-45% to-[#1b1d1f] to-50%'
            )}
          >
            <Icon name={icon} size={15} />
            {text}
            {mode === 'menu' && <Caret className="mr-1 ml-auto text-white" />}
          </button>
        ))}
      </div>
      <div className="ml-auto flex items-center pr-[17px]">
        <svg width="7" height="9" className="mr-[17px]" aria-hidden="true"><path d="M5.500 1L1.500 4.500l4 3.500" stroke="#ddd" strokeWidth="2" fill="none" /></svg>
        <Icon name="network" size={15} />
        <span className="ml-1"><Icon name="volume" size={15} /></span>
        <time className="ml-2 whitespace-nowrap">5:52 PM</time>
      </div>
    </div>
  );
}

export default function App() {
  return (
    <div className="flex h-screen flex-col overflow-hidden bg-[#f0f0f0] font-['Open_Sans',sans-serif] text-black">
      <TitleBar />
      <MenuBar />
      <Toolbars />
      <FormulaBar />
      <main className="relative flex min-h-0 flex-1">
        <div className="min-w-0 flex-1 overflow-hidden border-t border-l border-t-[#666] border-l-[#666] bg-white">
          <Sheet />
        </div>
        <VScroll />
        <div className="flex w-[9px] shrink-0 items-center justify-center border-l border-[#999]">
          <span className="h-8 border-l-2 border-dotted border-[#777]" />
        </div>
        <CellHint />
        <MessageBox />
      </main>
      <SheetTabs />
      <StatusBar />
      <Taskbar />
    </div>
  );
}
